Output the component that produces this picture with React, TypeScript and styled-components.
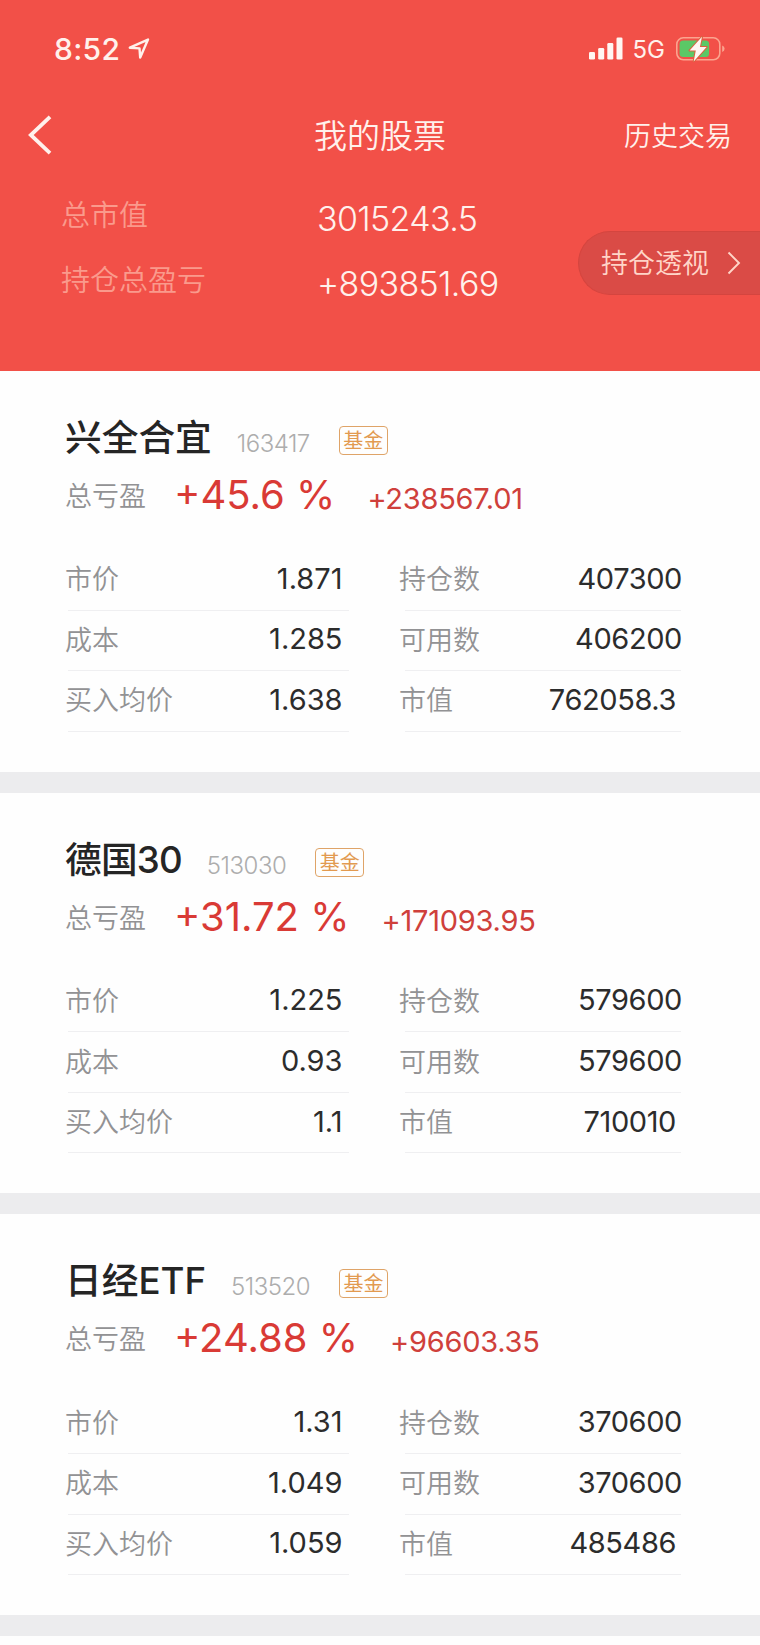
import React from "react";
import styled, { createGlobalStyle } from "styled-components";

const GlobalStyle = createGlobalStyle`
  * { box-sizing: border-box; }
  body {
    margin: 0;
    background: #fefefe;
    font-family: Inter, "Noto Sans CJK SC", sans-serif;
    -webkit-font-smoothing: antialiased;
  }
`;

const Page = styled.main`
  width: 760px;
  min-height: 1645px;
  overflow: hidden;
  background: #fefefe;
`;

const Header = styled.header`
  height: 371px;
  background: #f25048;
  color: #fff1ec;
`;

const StatusBar = styled.div`
  height: 97px;
  padding: 0 34px 0 54px;
  display: flex;
  align-items: center;
  justify-content: space-between;
`;

const StatusGroup = styled.div`
  display: flex;
  align-items: center;
`;

const Clock = styled.span`
  font-size: 30px;
  font-weight: 500;
  line-height: 36px;
  letter-spacing: 0.3px;
  margin-right: 8px;
`;

const Network = styled.span`
  font-size: 24px;
  line-height: 30px;
  padding-top: 2px;
  margin: 0 11px 0 10px;
`;

const NavBar = styled.nav`
  height: 76px;
  padding: 0 28px;
  display: grid;
  grid-template-columns: 1fr auto 1fr;
  align-items: center;
`;

const BackButton = styled.button`
  justify-self: start;
  display: flex;
  padding: 0;
  border: 0;
  background: none;
  color: inherit;
`;

const NavTitle = styled.h1`
  margin: 0;
  padding-top: 1px;
  font-size: 33px;
  font-weight: 350;
  line-height: 40px;
`;

const NavLink = styled.span`
  justify-self: end;
  padding-top: 3px;
  font-size: 27px;
  font-weight: 350;
  line-height: 40px;
`;

const Summary = styled.section`
  display: flex;
  padding: 8px 0 0 61px;
`;

const SummaryLabels = styled.div`
  width: 256px;
  padding-top: 2px;
  font-size: 29px;
  font-weight: 350;
  line-height: 65px;
  color: #fa9a8c;
`;

const SummaryValues = styled.div`
  flex: 1;
  padding-top: 5px;
  font-size: 34px;
  font-weight: 300;
  line-height: 65px;
  letter-spacing: -0.65px;
  color: #fff1ec;
`;

const InsightButton = styled.button`
  width: 182px;
  height: 64px;
  margin-top: 50px;
  padding: 0 19px 0 22px;
  display: flex;
  align-items: center;
  justify-content: space-between;
  border: 1px solid #d4453f;
  border-right: 0;
  border-radius: 32px 0 0 32px;
  background: #da4b46;
  color: #ffd5c8;
  font: 350 27px/40px Inter, "Noto Sans CJK SC", sans-serif;
`;

const InsightText = styled.span`
  padding-top: 2px;
`;

const Holding = styled.article`
  height: 421.7px;
  padding: 40px 79px 0 65px;
  border-bottom: 21px solid #ececee;
`;

const TitleRow = styled.div`
  height: 54px;
  display: flex;
  align-items: center;
`;

const Name = styled.h2<{ $tracking: number }>`
  margin: 0;
  font-size: 36.7px;
  font-weight: 500;
  line-height: 54px;
  letter-spacing: ${(p) => p.$tracking}px;
  color: #252525;
`;

const Code = styled.span`
  margin-left: 25px;
  padding-top: 12px;
  font-size: 24px;
  font-weight: 300;
  line-height: 30px;
  letter-spacing: -0.5px;
  color: #adadad;
`;

const Tag = styled.span`
  width: 49px;
  height: 29px;
  margin: 5px 0 0 29px;
  padding-top: 1px;
  border: 1.5px solid #dfa468;
  border-radius: 4px;
  font-size: 20px;
  line-height: 26px;
  text-align: center;
  color: #e29a50;
`;

const ProfitRow = styled.div`
  height: 60px;
  display: flex;
  align-items: center;
`;

const ProfitLabel = styled.span`
  width: 109px;
  padding-top: 4px;
  font-size: 27px;
  font-weight: 350;
  line-height: 40px;
  color: #929294;
`;

const Percent = styled.span`
  font-size: 40px;
  line-height: 50px;
  white-space: pre;
  color: #d93a35;
`;

const Amount = styled.span`
  margin-left: 32px;
  padding-top: 8px;
  font-size: 29px;
  line-height: 40px;
  letter-spacing: -0.25px;
  color: #cf403b;
`;

const Metrics = styled.div`
  margin-top: 25px;
  display: flex;
  justify-content: space-between;
  padding-left: 3px;
`;

const Column = styled.dl<{ $w: number; $tracking?: number }>`
  width: ${(p) => p.$w}px;
  margin: 0;
  letter-spacing: ${(p) => p.$tracking ?? 0}px;
`;

const Metric = styled.div`
  height: 60.6px;
  padding-bottom: 2px;
  display: flex;
  align-items: center;
  justify-content: space-between;
  border-bottom: 1px solid #efeff1;
`;

const MetricLabel = styled.dt<{ $outset: number }>`
  margin-left: -${(p) => p.$outset}px;
  padding-top: 3px;
  font-size: 27px;
  font-weight: 350;
  line-height: 40px;
  letter-spacing: 0;
  color: #929294;
`;

const MetricValue = styled.dd<{ $inset: number }>`
  margin: 0 ${(p) => p.$inset}px 0 0;
  font-size: 29px;
  line-height: 40px;
  color: #2c2c2c;
`;

const LocationIcon = () => (
  <svg width="22" height="22" viewBox="0 0 22 22" fill="none">
    <path d="M1.8 9.7 20 1.6 12.2 19.6 11.5 10.4Z" stroke="currentColor" strokeWidth="2.4" strokeLinejoin="round" />
  </svg>
);

const SignalIcon = () => (
  <svg width="34" height="23" viewBox="0 0 34 23" fill="#fff6f2">
    <rect x="0" y="15" width="6" height="7.5" rx="1.3" />
    <rect x="9.2" y="11" width="6" height="11.5" rx="1.3" />
    <rect x="18.3" y="6" width="6" height="16.5" rx="1.3" />
    <rect x="27.5" y="0.5" width="6" height="22" rx="1.3" />
  </svg>
);

const BatteryIcon = () => (
  <svg width="50" height="26" viewBox="0 0 50 26">
    <rect x="0.8" y="1.8" width="43" height="22" rx="6.5" fill="none" stroke="#fba48f" strokeWidth="1.6" />
    <path d="M46.2 9.5v6.5q2.4-.9 2.4-3.2t-2.4-3.3Z" fill="#fba48f" />
    <rect x="3.6" y="4.6" width="29.5" height="16.4" rx="3.5" fill="#5bc866" />
    <path d="M26 .8 13.6 14.4h6.2L17.7 25.4 30.6 11h-6.7Z" fill="#fff6f2" stroke="#d9623f" strokeWidth="2" strokeLinejoin="round" paintOrder="stroke" />
  </svg>
);

const BackIcon = () => (
  <svg width="24" height="40" viewBox="0 0 24 40" fill="none">
    <path d="M22 1.8 2.8 20 22 38.2" stroke="currentColor" strokeWidth="3.8" />
  </svg>
);

const ForwardIcon = () => (
  <svg width="14" height="24" viewBox="0 0 14 24" fill="none">
    <path d="M1.5 1.5 12 12 1.5 22.5" stroke="currentColor" strokeWidth="1.9" />
  </svg>
);

type HoldingData = {
  name: string;
  tracking: number;
  code: string;
  percent: string;
  amount: string;
  left: string[];
  right: string[];
};

const LEFT_LABELS = ["市价", "成本", "买入均价"];
const RIGHT_LABELS = ["持仓数", "可用数", "市值"];

const HOLDINGS: HoldingData[] = [
  {
    name: "兴全合宜",
    tracking: 0,
    code: "163417",
    percent: "+45.6 %",
    amount: "+238567.01",
    left: ["1.871", "1.285", "1.638"],
    right: ["407300", "406200", "762058.3"],
  },
  {
    name: "德国30",
    tracking: -0.8,
    code: "513030",
    percent: "+31.72 %",
    amount: "+171093.95",
    left: ["1.225", "0.93", "1.1"],
    right: ["579600", "579600", "710010"],
  },
  {
    name: "日经ETF",
    tracking: 0,
    code: "513520",
    percent: "+24.88 %",
    amount: "+96603.35",
    left: ["1.31", "1.049", "1.059"],
    right: ["370600", "370600", "485486"],
  },
];

const HoldingCard = ({ item }: { item: HoldingData }) => (
  <Holding>
    <TitleRow>
      <Name $tracking={item.tracking}>{item.name}</Name>
      <Code>{item.code}</Code>
      <Tag>基金</Tag>
    </TitleRow>
    <ProfitRow>
      <ProfitLabel>总亏盈</ProfitLabel>
      <Percent>{item.percent}</Percent>
      <Amount>{item.amount}</Amount>
    </ProfitRow>
    <Metrics>
      <Column $w={281}>
        {LEFT_LABELS.map((label, i) => (
          <Metric key={label}>
            <MetricLabel $outset={3}>{label}</MetricLabel>
            <MetricValue $inset={6.5}>{item.left[i]}</MetricValue>
          </Metric>
        ))}
      </Column>
      <Column $w={276} $tracking={-0.4}>
        {RIGHT_LABELS.map((label, i) => (
          <Metric key={label}>
            <MetricLabel $outset={6}>{label}</MetricLabel>
            <MetricValue $inset={i === 2 ? 5 : -1}>{item.right[i]}</MetricValue>
          </Metric>
        ))}
      </Column>
    </Metrics>
  </Holding>
);

export default function App() {
  return (
    <Page>
      <GlobalStyle />
      <Header>
        <StatusBar>
          <StatusGroup>
            <Clock>8:52</Clock>
            <LocationIcon />
          </StatusGroup>
          <StatusGroup>
            <SignalIcon />
            <Network>5G</Network>
            <BatteryIcon />
          </StatusGroup>
        </StatusBar>
        <NavBar>
          <BackButton aria-label="返回">
            <BackIcon />
          </BackButton>
          <NavTitle>我的股票</NavTitle>
          <NavLink>历史交易</NavLink>
        </NavBar>
        <Summary>
          <SummaryLabels>
            <div>总市值</div>
            <div>持仓总盈亏</div>
          </SummaryLabels>
          <SummaryValues>
            <div>3015243.5</div>
            <div>+893851.69</div>
          </SummaryValues>
          <InsightButton>
            <InsightText>持仓透视</InsightText>
            <ForwardIcon />
          </InsightButton>
        </Summary>
      </Header>
      {HOLDINGS.map((item) => (
        <HoldingCard key={item.code} item={item} />
      ))}
    </Page>
  );
}
